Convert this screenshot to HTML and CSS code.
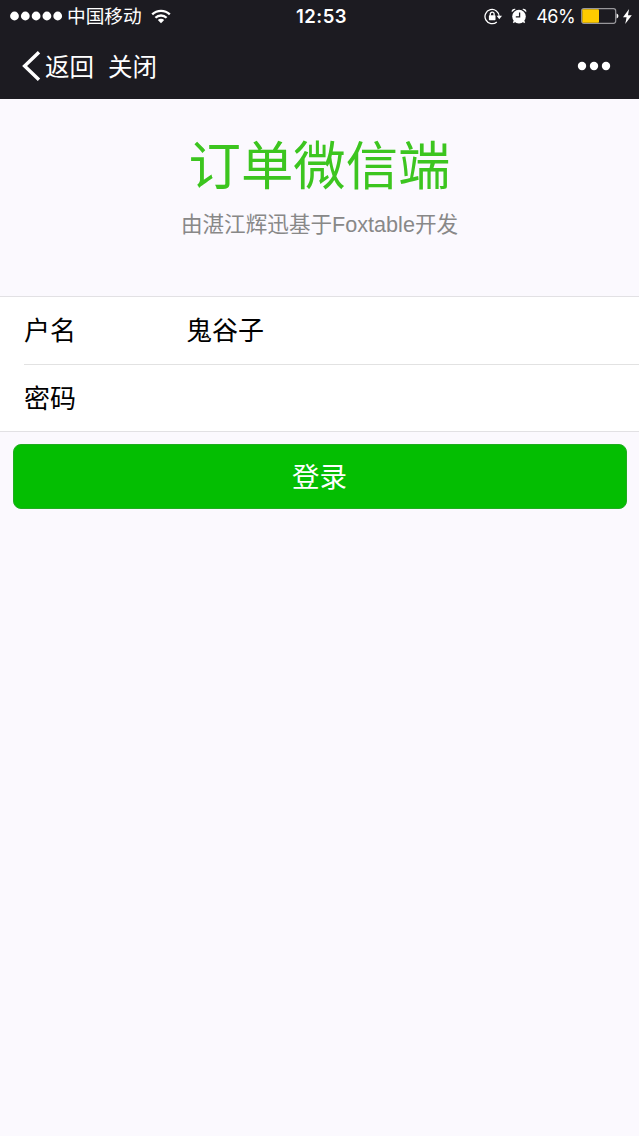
FILE: index.html
```html
<!DOCTYPE html>
<html lang="zh-CN">
<head>
  <meta charset="UTF-8" />
  <meta name="viewport" content="width=device-width, initial-scale=1.0"/>
  <title>订单微信端</title>
  <link rel="stylesheet" href="styles.css">
</head>
<body>
  <header>
    <div class="status-bar">
      <div class="status-left">
        <svg class="signal" width="53" height="10" viewBox="0 0 53 10" fill="#fff">
          <circle cx="4.5" cy="5" r="4.4"/>
          <circle cx="15.3" cy="5" r="4.4"/>
          <circle cx="26.1" cy="5" r="4.4"/>
          <circle cx="36.9" cy="5" r="4.4"/>
          <circle cx="47.7" cy="5" r="4.4"/>
        </svg>
        <span class="carrier">中国移动</span>
        <svg class="wifi" width="20" height="15" viewBox="0 0 20 15" fill="none" stroke="#fff" stroke-width="2.3">
          <path d="M1.2 5.4a12.6 12.6 0 0 1 17.6 0"/>
          <path d="M4.4 8.8a8 8 0 0 1 11.2 0"/>
          <path d="M10 14.2L6.8 11a4.6 4.6 0 0 1 6.4 0z" fill="#fff" stroke="none"/>
        </svg>
      </div>
      <div class="time">12:53</div>
      <div class="status-right">
        <svg class="rotation-lock" width="19" height="17" viewBox="0 0 19 17" fill="none" stroke="#fff" stroke-width="1.3">
          <path d="M12.8 13.9A7.1 7.1 0 1 1 15.2 8.4"/>
          <path d="M12.6 7.8h5.4l-2.7 3.5z" fill="#fff" stroke="none"/>
          <path d="M6.3 7.8V6.1a1.9 1.9 0 0 1 3.8 0v1.7"/>
          <rect x="4.9" y="7.3" width="6.6" height="4.9" rx=".6" fill="#fff" stroke="none"/>
        </svg>
        <svg class="alarm" width="16" height="16" viewBox="0 0 16 16" fill="#fff">
          <circle cx="8" cy="8.6" r="6.8"/>
          <path d="M.7 4.3A3 3 0 0 1 4.8.9zM15.3 4.3A3 3 0 0 0 11.2.9z"/>
          <path d="M3.6 13l-1.2 1.7M12.4 13l1.2 1.7" stroke="#fff" stroke-width="1.5"/>
          <path d="M8.6 4.6v4.2H4.8" fill="none" stroke="#1c1b21" stroke-width="1.3"/>
        </svg>
        <span class="percent">46%</span>
        <svg class="battery" width="38" height="16" viewBox="0 0 38 16">
          <rect x=".7" y=".7" width="34" height="14.6" rx="2.2" fill="none" stroke="#98979b" stroke-width="1.2"/>
          <rect x="1.3" y="1.3" width="16.7" height="13.4" rx="1" fill="#ffcc00"/>
          <path d="M35.6 5.5c2.4.8 2.4 4.2 0 5z" fill="#fff"/>
        </svg>
        <svg class="bolt" width="9" height="15" viewBox="0 0 9 15" fill="#fff">
          <path d="M6.1 0L0 8.2h3.6L2.2 15 8.8 6.2H5z"/>
        </svg>
      </div>
    </div>
    <nav>
      <svg class="back-icon" width="19" height="30" viewBox="0 0 19 30" fill="none" stroke="#fff" stroke-width="3.4">
        <path d="M17 1.2L2.6 15 17 28.8"/>
      </svg>
      <a class="back">返回</a>
      <a class="close">关闭</a>
      <svg class="more" width="34" height="10" viewBox="0 0 34 10" fill="#fff">
        <circle cx="5" cy="5" r="4.2"/>
        <circle cx="17" cy="5" r="4.2"/>
        <circle cx="29" cy="5" r="4.2"/>
      </svg>
    </nav>
  </header>

  <div class="title-area">
    <h1>订单微信端</h1>
    <p>由湛江辉迅基于Foxtable开发</p>
  </div>

  <form>
    <div class="cells">
      <div class="cell">
        <label for="user">户名</label>
        <input type="text" id="user" value="鬼谷子" />
      </div>
      <div class="cell">
        <label for="password">密码</label>
        <input type="password" id="password" />
      </div>
    </div>
    <button type="button">登录</button>
  </form>
</body>
</html>
```

FILE: styles.css
```css
* {
  box-sizing: border-box;
}

body {
  margin: 0;
  min-height: 100vh;
  background-color: #fbf9fe;
  font-family: "Liberation Sans", "Noto Sans CJK SC", sans-serif;
}

header {
  height: 99px;
  background-color: #1c1b21;
  color: #fff;
}

.status-bar {
  display: grid;
  grid-template-columns: 1fr auto 1fr;
  align-items: center;
  height: 32px;
  padding: 0 7px 0 10px;
}

.status-left,
.status-right {
  display: flex;
  align-items: center;
}

.status-right {
  justify-content: flex-end;
}

.carrier {
  margin-left: 4px;
  padding-top: 2px;
  font-size: 18.7px;
  line-height: 30px;
}

.wifi {
  margin-left: 9px;
}

.time {
  padding-left: 1px;
  font-family: Inter, sans-serif;
  font-size: 18.5px;
  font-weight: 600;
  letter-spacing: 0.5px;
}

.alarm {
  margin-left: 8px;
}

.percent {
  margin-left: 9px;
  font-family: Inter, sans-serif;
  font-size: 18px;
  letter-spacing: -0.6px;
}

.battery {
  margin-left: 6px;
}

.bolt {
  margin-left: 4px;
}

nav {
  display: flex;
  align-items: center;
  height: 67px;
  padding: 0 28px 0 22px;
}

.back,
.close {
  padding-top: 4px;
  font-size: 24.5px;
  line-height: 36px;
}

.back {
  margin-left: 4px;
}

.close {
  margin-left: 14px;
}

.more {
  margin-left: auto;
}

.title-area {
  height: 197px;
  padding-top: 29px;
  text-align: center;
}

h1 {
  margin: 0;
  color: #3cc51f;
  font-size: 52.4px;
  font-weight: 400;
  line-height: 78px;
}

.title-area p {
  margin: 3px 0 0;
  color: #888;
  font-size: 21.6px;
  line-height: 32px;
}

.cells {
  background-color: #fff;
  border-top: 1px solid #e2e1e4;
  border-bottom: 1px solid #e2e1e4;
  padding-left: 24px;
}

.cell {
  display: flex;
  align-items: center;
  height: 67px;
  padding-bottom: 4px;
}

.cell + .cell {
  border-top: 1px solid #e2e2e2;
  padding-bottom: 3px;
}

.cell:first-child {
  height: 67px;
}

label {
  width: 162px;
  font-size: 26px;
}

input {
  flex: 1;
  min-width: 0;
  padding: 0;
  border: 0;
  outline: 0;
  background: transparent;
  color: #000;
  font: inherit;
  font-size: 26px;
}

button {
  display: block;
  width: 614px;
  height: 65px;
  margin: 12px auto 0;
  padding: 0 0 3px;
  border: 1px solid #20ad20;
  border-radius: 8px;
  background-color: #04be02;
  color: #fff;
  font-family: inherit;
  font-size: 27.5px;
}
```
